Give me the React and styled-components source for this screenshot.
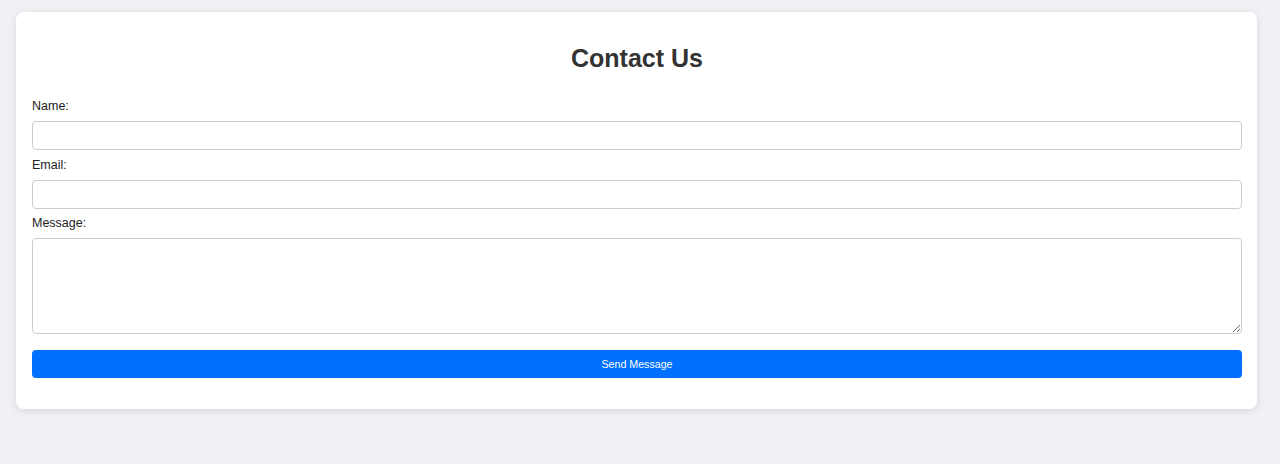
import React from "react";
import styled, { createGlobalStyle } from "styled-components";

const Global = createGlobalStyle`
  html, body { margin: 0; padding: 0; background: #f0f0f5; }
  body { font-family: "Liberation Sans", Arial, Helvetica, sans-serif; min-height: 464px; }
  * { box-sizing: border-box; }
`;

const Page = styled.div`
  padding: 12px 23px 0 16px;
`;

const Card = styled.div`
  background: #fff;
  border-radius: 8px;
  box-shadow: 0 2px 8px rgba(0, 0, 0, 0.1);
  padding: 16px 15px 31px 16px;
`;

const Title = styled.h2`
  margin: 16px 0 26px;
  text-align: center;
  font-size: 25px;
  line-height: 29px;
  font-weight: 700;
  color: #333;
`;

const Form = styled.form`
  display: flex;
  flex-direction: column;
`;

const Label = styled.label`
  display: block;
  font-size: 12.5px;
  line-height: 14px;
  color: #222;
  margin-bottom: 8px;
`;

const Input = styled.input`
  display: block;
  width: 100%;
  height: 29px;
  margin: 0 0 7.5px;
  padding: 6px 8px;
  border: 1px solid #ccc;
  border-radius: 4px;
  font-family: inherit;
  font-size: 13px;
  background: #fff;
  outline: none;
`;

const TextArea = styled.textarea`
  display: block;
  width: 100%;
  height: 96px;
  margin: 0 0 16px;
  padding: 6px 8px;
  border: 1px solid #ccc;
  border-radius: 4px;
  font-family: inherit;
  font-size: 13px;
  background: #fff;
  outline: none;
  resize: vertical;
`;

const Button = styled.button`
  display: block;
  width: 100%;
  height: 28px;
  border: none;
  border-radius: 4px;
  background: #0070ff;
  color: #fff;
  font-family: inherit;
  font-size: 10.67px;
  cursor: pointer;
`;

export default function App() {
  return (
    <>
      <Global />
      <Page>
        <Card>
          <Title>Contact Us</Title>
          <Form onSubmit={(e) => e.preventDefault()}>
            <Label htmlFor="name">Name:</Label>
            <Input id="name" type="text" />
            <Label htmlFor="email">Email:</Label>
            <Input id="email" type="email" />
            <Label htmlFor="message">Message:</Label>
            <TextArea id="message" />
            <Button type="submit">Send Message</Button>
          </Form>
        </Card>
      </Page>
    </>
  );
}
